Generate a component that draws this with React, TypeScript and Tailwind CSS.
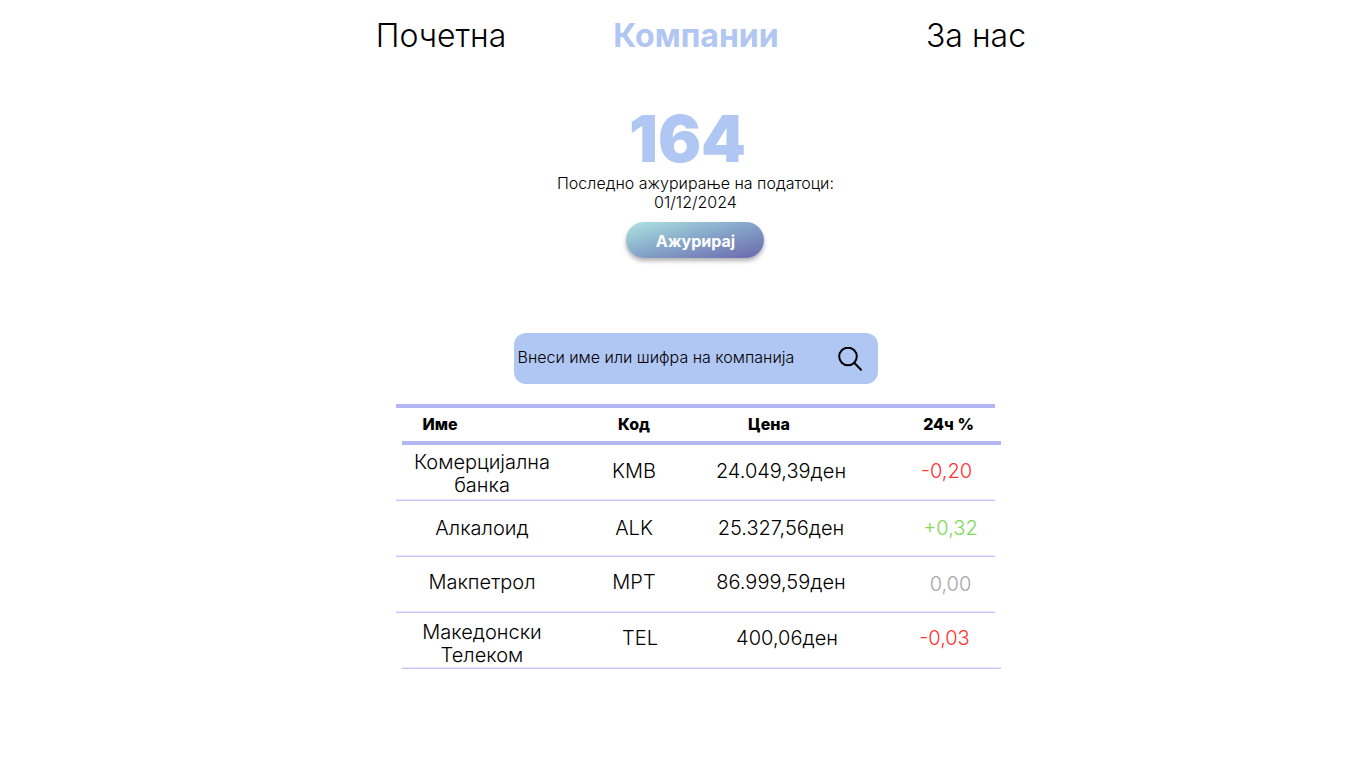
import { useState } from "react";

type Company = {
  name: string;
  code: string;
  price: string;
  change: string;
  tone: string;
  row: string;
  nameCell: string;
  valueCell: string;
  changeCell: string;
};

const companies: Company[] = [
  { name: "Комерцијална банка", code: "KMB", price: "24.049,39ден", change: "-0,20", tone: "text-[#ff3131]", row: "mr-1.5", nameCell: "px-2 pt-0.5", valueCell: "pb-0.5", changeCell: "pl-9 pb-0.5" },
  { name: "Алкалоид", code: "ALK", price: "25.327,56ден", change: "+0,32", tone: "text-[#7ed957]", row: "mr-1.5", nameCell: "px-2", valueCell: "", changeCell: "pl-11" },
  { name: "Макпетрол", code: "MPT", price: "86.999,59ден", change: "0,00", tone: "text-[#a6a6a6]", row: "mr-1.5", nameCell: "px-2 pb-1", valueCell: "pb-1", changeCell: "pl-11" },
  { name: "Македонски Телеком", code: "TEL", price: "400,06ден", change: "-0,03", tone: "text-[#ff3131]", row: "ml-1.5", nameCell: "pl-2 pr-5 pt-1.5", valueCell: "pb-1", changeCell: "pl-5 pb-1" },
];

function Nav() {
  return (
    <nav className="mx-auto w-full max-w-[690px] pl-9 pt-4">
      <ul className="grid grid-cols-[134px_1fr_104px] text-[32px] leading-10 whitespace-nowrap">
        <li className="flex justify-center">
          <a href="#home">Почетна</a>
        </li>
        <li className="flex justify-center pr-10">
          <a href="#companies" aria-current="page" className="font-bold text-[#b0c6f3]">Компании</a>
        </li>
        <li className="flex justify-center">
          <a href="#about">За нас</a>
        </li>
      </ul>
    </nav>
  );
}

function Summary() {
  return (
    <section className="flex flex-col items-center text-center">
      <h1 className="pr-4 text-[64px] leading-[70px] font-black text-[#b0c6f3]">164</h1>
      <p className="text-base leading-[19px]">
        Последно ажурирање на податоци:
        <br />
        01/12/2024
      </p>
      <button
        type="button"
        className="mt-2.5 h-9 w-[138px] rounded-full bg-linear-[165deg,#aee4e0,#88aacb_45%,#6a67ab] pt-0.5 text-base font-bold text-white shadow-[0_3px_4px_rgba(0,0,0,0.3)]"
      >
        Ажурирај
      </button>
    </section>
  );
}

function Search() {
  const [query, setQuery] = useState("");
  return (
    <form
      role="search"
      onSubmit={(e) => e.preventDefault()}
      className="mt-[75px] flex h-[51px] w-full max-w-[364px] items-center rounded-xl bg-[#b0c6f3] pr-4 pl-1"
    >
      <input
        type="search"
        aria-label="Внеси име или шифра на компанија"
        placeholder="Внеси име или шифра на компанија"
        value={query}
        onChange={(e) => setQuery(e.target.value)}
        className="min-w-0 flex-1 bg-transparent pb-1 text-base outline-none placeholder:text-black placeholder:opacity-100"
      />
      <button type="submit" aria-label="Барај" className="ml-2">
        <svg viewBox="0 0 24 24" className="size-6" fill="none" stroke="#000" strokeWidth="2">
          <circle cx="10" cy="9.5" r="8.8" />
          <path d="M16.2 15.8 L23 22.8" strokeLinecap="round" />
        </svg>
      </button>
    </form>
  );
}

function CompanyTable() {
  const columns = "grid grid-cols-[172px_132px_162px_1fr]";
  return (
    <table className="mt-5 ml-1.5 block w-full max-w-[605px]">
      <thead className="mr-1.5 block border-t-4 border-[#b4b6f3]">
        <tr className={`${columns} -mr-1.5 ml-1.5 h-[37px] items-center border-b-4 border-[#b4b6f3] pb-0.5 text-base leading-5`}>
          <th scope="col" className="pr-24 font-extrabold">Име</th>
          <th scope="col" className="pr-3 font-extrabold">Код</th>
          <th scope="col" className="pr-9 font-extrabold">Цена</th>
          <th scope="col" className="pl-7 font-extrabold">24ч %</th>
        </tr>
      </thead>
      <tbody className="block text-center text-xl leading-[23px]">
        {companies.map((c) => (
          <tr
            key={c.code}
            className={`${columns} ${c.row} h-14 items-center border-b border-[#c3c5fa] shadow-[inset_0_-1px_#e9e9fd]`}
          >
            <td className={c.nameCell}>{c.name}</td>
            <td className={c.valueCell}>{c.code}</td>
            <td className={c.valueCell}>{c.price}</td>
            <td className={`${c.changeCell} ${c.tone}`}>{c.change}</td>
          </tr>
        ))}
      </tbody>
    </table>
  );
}

export default function App() {
  return (
    <div className="min-h-screen bg-white font-['Inter','Noto_Sans',sans-serif] font-light text-black">
      <Nav />
      <main className="flex flex-col items-center pt-12 pl-[25px]">
        <Summary />
        <Search />
        <CompanyTable />
      </main>
    </div>
  );
}
